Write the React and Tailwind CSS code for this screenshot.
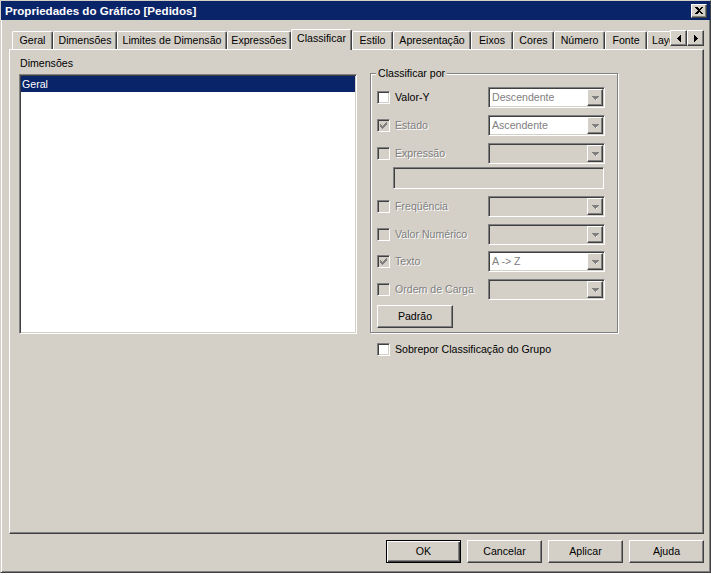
import React from 'react';

const raised = 'border border-t-white border-l-white border-r-[#404040] border-b-[#404040] shadow-[inset_-1px_-1px_0_#808080]';
const sunken = 'border border-t-[#808080] border-l-[#808080] border-r-white border-b-white shadow-[inset_1px_1px_0_#404040,inset_-1px_-1px_0_#d4d0c8]';
const grayText = 'text-[#808080] [text-shadow:1px_1px_0_#ffffff]';

const tabs = [
  { label: 'Geral', w: 'w-[41px]' },
  { label: 'Dimensões', w: 'w-[64px]' },
  { label: 'Limites de Dimensão', w: 'w-[110px]' },
  { label: 'Expressões', w: 'w-[64px]' },
  { label: 'Classificar', w: 'w-[61px]', selected: true },
  { label: 'Estilo', w: 'w-[41px]' },
  { label: 'Apresentação', w: 'w-[78px]' },
  { label: 'Eixos', w: 'w-[42px]' },
  { label: 'Cores', w: 'w-[41px]' },
  { label: 'Número', w: 'w-[51px]' },
  { label: 'Fonte', w: 'w-[42px]' },
  { label: 'Layout', w: 'w-[46px]', left: true }
];

function Check({ color }) {
  // classic 7x7 tick
  const cols = [2, 3, 4, 3, 2, 1, 0];
  return (
    <svg width="7" height="7" viewBox="0 0 7 7" shapeRendering="crispEdges">
      {cols.map((y, x) => (
        <rect key={x} x={x} y={y} width="1" height="3" fill={color} />
      ))}
    </svg>
  );
}

function Checkbox({ checked, disabled }) {
  return (
    <div className={`w-[13px] h-[13px] shrink-0 flex items-center justify-center ${sunken} ${disabled ? 'bg-[#d4d0c8]' : 'bg-white'}`}>
      {checked && <Check color={disabled ? '#808080' : '#000000'} />}
    </div>
  );
}

function DownArrow() {
  return (
    <svg width="7" height="4" viewBox="0 0 7 4" shapeRendering="crispEdges">
      <rect x="0" y="0" width="7" height="1" fill="#808080" />
      <rect x="1" y="1" width="5" height="1" fill="#808080" />
      <rect x="2" y="2" width="3" height="1" fill="#808080" />
      <rect x="3" y="3" width="1" height="1" fill="#808080" />
      <rect x="4" y="3" width="1" height="1" fill="#ffffff" />
    </svg>
  );
}

function Combo({ value, white }) {
  return (
    <div className={`w-[117px] h-[21px] shrink-0 p-[1px] flex ${sunken} ${white ? 'bg-white' : 'bg-[#d4d0c8]'}`}>
      <div className="flex-1 pl-[2px] leading-[17px] text-[#808080] whitespace-nowrap">{value}</div>
      <div className={`w-[16px] h-[17px] bg-[#d4d0c8] flex items-center justify-center ${raised}`}>
        <DownArrow />
      </div>
    </div>
  );
}

function SortRow({ label, checked, disabled, value, white, mt }) {
  return (
    <div className={`flex items-center h-[21px] w-[228px] ${mt}`}>
      <Checkbox checked={checked} disabled={disabled} />
      <span className={`flex-1 ml-[5px] whitespace-nowrap ${disabled ? grayText : 'text-black'}`}>{label}</span>
      <Combo value={value} white={white} />
    </div>
  );
}

function Button({ children, isDefault, className }) {
  return (
    <button
      className={`h-[23px] bg-[#d4d0c8] text-black flex items-center justify-center ${
        isDefault
          ? 'border border-black shadow-[inset_1px_1px_0_#ffffff,inset_-1px_-1px_0_#404040,inset_-2px_-2px_0_#808080]'
          : raised
      } ${className}`}
    >
      {children}
    </button>
  );
}

export default function App() {
  return (
    <div className="w-[711px] h-[575px] bg-white font-['Liberation_Sans',Arial,sans-serif] text-[10.6px] leading-[13px] overflow-hidden">
      <div className="w-[711px] h-[573px] bg-[#d4d0c8] flex flex-col border border-t-[#d4d0c8] border-l-[#d4d0c8] border-r-[#404040] border-b-[#404040] shadow-[inset_1px_1px_0_#ffffff,inset_-1px_-1px_0_#808080]">
        {/* title bar */}
        <div className="h-[19px] bg-[#0a246a] flex items-center justify-between pl-[4px] pr-[3px]">
          <span className="text-white font-bold text-[11.6px]">Propriedades do Gráfico [Pedidos]</span>
          <div className={`w-[16px] h-[14px] bg-[#d4d0c8] flex items-center justify-center ${raised}`}>
            <svg width="8" height="7" viewBox="0 0 8 7" shapeRendering="crispEdges">
              <path d="M0 0h2l2 2 2-2h2l-3 3.5 3 3.5h-2l-2-2-2 2h-2l3-3.5z" fill="#000000" />
            </svg>
          </div>
        </div>

        {/* tab strip */}
        <div className="mt-[9px] ml-[11px] mr-[6px] h-[20px] flex items-end">
          <div className="w-[658px] shrink-0 flex items-end h-[20px] overflow-x-clip">
            {tabs.map((t) => (
              <div
                key={t.label}
                className={`${t.w} shrink-0 flex items-center whitespace-nowrap rounded-t-[2px] border-t border-l border-r border-t-white border-l-white border-r-[#404040] shadow-[inset_-1px_0_0_#808080] bg-[#d4d0c8] ${
                  t.left ? 'justify-start pl-[4px]' : 'justify-center'
                } ${t.selected ? 'h-[21px] -mb-px relative z-10 pb-[4px]' : 'h-[18px]'}`}
              >
                {t.label}
              </div>
            ))}
          </div>
          <div className="self-start mt-[1px] flex">
            <div className={`w-[17px] h-[16px] bg-[#d4d0c8] flex items-center justify-center ${raised}`}>
              <svg width="4" height="7" viewBox="0 0 4 7" shapeRendering="crispEdges">
                <path d="M4 0v7L0 3.5z" fill="#000000" />
              </svg>
            </div>
            <div className={`w-[17px] h-[16px] bg-[#d4d0c8] flex items-center justify-center ${raised}`}>
              <svg width="4" height="7" viewBox="0 0 4 7" shapeRendering="crispEdges">
                <path d="M0 0v7l4-3.5z" fill="#000000" />
              </svg>
            </div>
          </div>
        </div>

        {/* tab panel */}
        <div className={`ml-[8px] w-[695px] h-[485px] bg-[#d4d0c8] flex items-start pl-[9px] ${raised}`}>
          <div className="pt-[7px] w-[338px]">
            <div className="mb-[4px] pl-[1px]">Dimensões</div>
            <div className={`h-[260px] bg-white p-[1px] ${sunken}`}>
              <div className="h-[16px] bg-[#0a246a] text-white pl-[1px] leading-[16px]">Geral</div>
            </div>
          </div>

          <div className="ml-[13px] pt-[23px]">
            <div className="relative w-[248px] h-[260px] border border-[#808080] shadow-[inset_1px_1px_0_#ffffff,1px_1px_0_#ffffff] pl-[6px] pt-[13px]">
              <span className="absolute -top-[7px] left-[5px] bg-[#d4d0c8] px-[2px]">Classificar por</span>
              <SortRow label="Valor-Y" value="Descendente" white />
              <SortRow label="Estado" checked disabled value="Ascendente" white mt="mt-[7px]" />
              <SortRow label="Expressão" disabled mt="mt-[7px]" />
              <div className={`ml-[16px] mt-[3px] w-[211px] h-[22px] bg-[#d4d0c8] ${sunken}`} />
              <SortRow label="Freqüência" disabled mt="mt-[7px]" />
              <SortRow label="Valor Numérico" disabled mt="mt-[7px]" />
              <SortRow label="Texto" checked disabled value="A -> Z" white mt="mt-[6px]" />
              <SortRow label="Ordem de Carga" disabled mt="mt-[7px]" />
              <Button className="w-[76px] mt-[5px]">Padrão</Button>
            </div>
            <div className="flex items-center mt-[10px] pl-[7px]">
              <Checkbox />
              <span className="ml-[5px]">Sobrepor Classificação do Grupo</span>
            </div>
          </div>
        </div>

        {/* bottom buttons */}
        <div className="mt-[6px] mr-[6px] flex justify-end gap-[6px]">
          <Button isDefault className="w-[75px]">OK</Button>
          <Button className="w-[75px]">Cancelar</Button>
          <Button className="w-[75px]">Aplicar</Button>
          <Button className="w-[75px]">Ajuda</Button>
        </div>
      </div>
    </div>
  );
}
